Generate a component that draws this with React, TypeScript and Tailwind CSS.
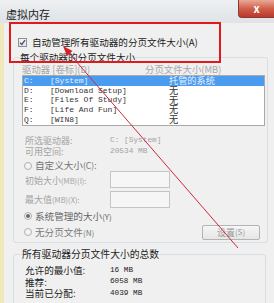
const drives = [
  { letter: "C:", label: "[System]", size: "托管的系统", selected: true },
  { letter: "D:", label: "[Download Setup]", size: "无", selected: false },
  { letter: "E:", label: "[Files Of Study]", size: "无", selected: false },
  { letter: "F:", label: "[Life And Fun]", size: "无", selected: false },
  { letter: "Q:", label: "[WIN8]", size: "无", selected: false },
];

function Radio({ checked }: { checked?: boolean }) {
  return (
    <span className="flex h-[8px] w-[8px] shrink-0 items-center justify-center rounded-full border border-[#b0b0b0] bg-[#f4f4f4]">
      {checked && <span className="h-[4px] w-[4px] rounded-full bg-[#6a6a6a]" />}
    </span>
  );
}

export default function App() {
  return (
    <div className="relative h-[303px] w-[274px] overflow-hidden bg-[#f0f0f0] font-['Noto_Sans_CJK_SC',sans-serif] text-[#1c1c1c]">
      {/* 标题栏 */}
      <div className="flex h-[23px] items-start justify-between bg-linear-to-b from-[#eef0f2] via-[#e6e9ec] to-[#dfe3e7]">
        <span className="ml-[6px] mt-[7px] text-[11px] leading-[14px]">虚拟内存</span>
        <div className="flex h-[18px] w-[36px] items-center justify-center rounded-bl-[4px] border border-r-0 border-t-0 border-[#8a3a30] bg-linear-to-b from-[#e9a897] via-[#d0604b] to-[#b9382c] text-[11px] font-bold leading-none text-white">
          x
        </div>
      </div>

      <div className="flex h-[280px]">
        <div className="w-[4px] bg-[#efe8bd]" />
        <div className="flex-1 pt-[13px]">
          {/* 自动管理 */}
          <div className="flex h-[12px] items-center gap-[5px] pl-[14px]">
            <span className="flex h-[9px] w-[9px] items-center justify-center border border-[#8e8f8f] bg-linear-to-b from-[#f4f4f4] to-[#e2e2e2]">
              <svg width="7" height="7" viewBox="0 0 7 7">
                <path d="M1 3.6 L2.8 5.4 L6 1.2" fill="none" stroke="#3f5286" strokeWidth="1.3" />
              </svg>
            </span>
            <span className="text-[9.6px] leading-[12px]">自动管理所有驱动器的分页文件大小(A)</span>
          </div>

          {/* 每个驱动器 */}
          <fieldset className="ml-[9px] mt-[2px] w-[255px] rounded-[3px] border border-[#d5dfe5] pb-[2px] pl-[8px] pr-[2px]">
            <legend className="-ml-[2px] text-[9.6px] leading-[14px]">每个驱动器的分页文件大小</legend>

            <div className="flex h-[11px] items-center text-[9.4px] leading-[11px] text-[#a6a6a6]">
              <span className="w-[123px]">驱动器 [卷标](D)</span>
              <span>分页文件大小(MB)</span>
            </div>

            <div className="h-[51px] w-[243px] border border-[#a9a9a9] bg-white">
              {drives.map((d) => (
                <div
                  key={d.letter}
                  className={`flex h-[9.7px] items-center ${d.selected ? "bg-[#4a9cf0] text-[#e8f1fb]" : "text-[#333]"}`}
                >
                  <span className="w-[27px] pl-[1px] font-['Liberation_Mono',monospace] text-[8px] leading-none">
                    {d.letter}
                  </span>
                  <span className="w-[119px] font-['Liberation_Mono',monospace] text-[8px] leading-none">
                    {d.label}
                  </span>
                  <span className="text-[9.2px] leading-none">{d.size}</span>
                </div>
              ))}
            </div>

            <div className="mt-[9px] flex h-[11px] items-center text-[9px] leading-[11px] text-[#a3a3a3]">
              <span className="w-[88px] pl-[3px]">所选驱动器:</span>
              <span className="font-['Liberation_Mono',monospace] text-[7.8px]">C:  [System]</span>
            </div>
            <div className="flex h-[11px] items-center text-[9px] leading-[11px] text-[#a3a3a3]">
              <span className="w-[88px] pl-[3px]">可用空间:</span>
              <span className="font-['Liberation_Mono',monospace] text-[7.8px]">20534 MB</span>
            </div>

            <div className="mt-[3px] flex h-[11px] items-center gap-[3px] pl-[2px] text-[9.6px] leading-[11px] text-[#727272]">
              <Radio />
              <span>
                自定义大小<span className="text-[8.5px]">(C):</span>
              </span>
            </div>
            <div className="flex h-[17px] items-start">
              <span className="w-[88px] pl-[3px] pt-[4px] text-[9px] leading-[11px] text-[#a3a3a3]">
                初始大小<span className="text-[7.5px]">(MB)(I):</span>
              </span>
              <span className="h-[17px] w-[60px] border border-[#c3c5c9] bg-[#f6f6f6]" />
            </div>
            <div className="mt-[3px] flex h-[17px] items-start">
              <span className="w-[88px] pl-[3px] pt-[3px] text-[9px] leading-[11px] text-[#a3a3a3]">
                最大值<span className="text-[7.5px]">(MB)(X):</span>
              </span>
              <span className="h-[17px] w-[60px] border border-[#c3c5c9] bg-[#f6f6f6]" />
            </div>

            <div className="flex h-[16px] items-center gap-[3px] pl-[2px] text-[9.6px] leading-[11px] text-[#666]">
              <Radio checked />
              <span>
                系统管理的大小<span className="text-[8px]">(Y)</span>
              </span>
            </div>
            <div className="flex h-[16px] items-center justify-between">
              <div className="flex items-center gap-[3px] pl-[2px] text-[9.6px] leading-[11px] text-[#7a7a7a]">
                <Radio />
                <span>
                  无分页文件<span className="text-[8px]">(N)</span>
                </span>
              </div>
              <button className="mr-[5px] flex h-[15px] w-[58px] items-center justify-center rounded-[2px] border border-[#b4b4b4] bg-linear-to-b from-[#f6f6f6] to-[#e6e6e6] text-[9px] leading-none text-[#9a9a9a]">
                设置<span className="text-[8px]">(S)</span>
              </button>
            </div>
          </fieldset>

          {/* 总数 */}
          <fieldset className="ml-[9px] mt-[4px] w-[253px] rounded-[3px] border border-[#d5dfe5] pb-[6px] pl-[8px]">
            <legend className="text-[9.8px] leading-[14px]">所有驱动器分页文件大小的总数</legend>
            <div className="pt-[4px]">
              {[
                ["允许的最小值:", "16 MB"],
                ["推荐:", "6058 MB"],
                ["当前已分配:", "4039 MB"],
              ].map(([k, v]) => (
                <div key={k} className="flex h-[11.5px] items-center">
                  <span className="w-[88px] pl-[3px] text-[9.6px] leading-[11px]">{k}</span>
                  <span className="font-['Liberation_Mono',monospace] text-[7.7px] leading-none">{v}</span>
                </div>
              ))}
            </div>
          </fieldset>
        </div>
      </div>

      {/* 标注：红框与箭头 */}
      <div className="pointer-events-none absolute left-[9px] top-[22px] h-[41px] w-[212px] border-2 border-[#e0191b]" />
      <svg className="pointer-events-none absolute left-0 top-0" width="274" height="303" viewBox="0 0 274 303">
        <line x1="238" y1="248" x2="68" y2="52" stroke="#d0283a" strokeWidth="1" />
        <polygon points="63,46 72.5,51 67,56" fill="#d81f22" />
      </svg>
    </div>
  );
}
